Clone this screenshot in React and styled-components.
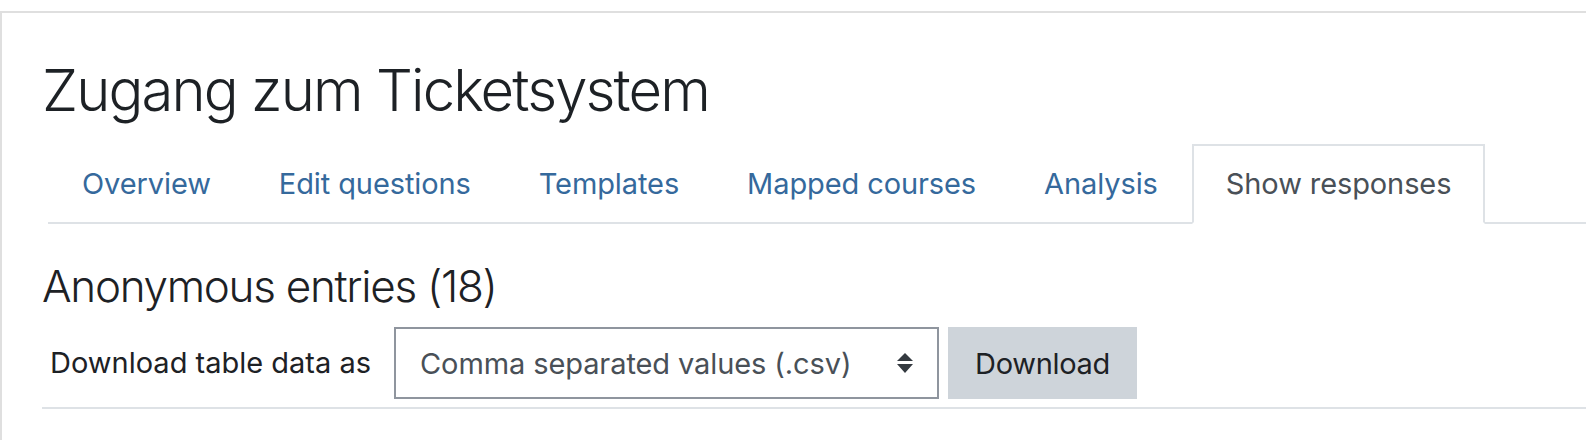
import React from 'react';
import styled, { createGlobalStyle } from 'styled-components';

const GlobalStyle = createGlobalStyle`
  html, body {
    margin: 0;
    padding: 0;
    background: #fff;
    overflow: hidden;
  }
  body {
    font-family: Inter, "Noto Sans", "Liberation Sans", sans-serif;
    color: #1d2125;
  }
`;

const tabs = [
  { label: 'Overview' },
  { label: 'Edit questions' },
  { label: 'Templates' },
  { label: 'Mapped courses' },
  { label: 'Analysis' },
  { label: 'Show responses', active: true },
];

const Panel = styled.div`
  margin-top: 11px;
  border-top: 2px solid #dfdfdf;
  border-left: 2px solid #dfdfdf;
  padding: 41px 0 0 40px;
  min-height: 440px;
  box-sizing: border-box;
`;

const Title = styled.h2`
  margin: 0 0 18px;
  font-size: 58px;
  font-weight: 300;
  line-height: 72px;
  letter-spacing: -1.9px;
  color: #1d2125;
`;

const TabList = styled.ul`
  display: flex;
  list-style: none;
  margin: 0 0 0 6px;
  padding: 0;
  border-bottom: 2px solid #dee2e6;
`;

const Tab = styled.li`
  margin-bottom: -2px;
`;

const TabLink = styled.a`
  display: block;
  padding: 16px 32px;
  font-size: 29px;
  line-height: 44px;
  letter-spacing: -0.1px;
  text-decoration: none;
  border: 2px solid transparent;
  color: ${(p) => (p.$active ? '#495057' : '#35699c')};
  ${(p) =>
    p.$active &&
    `
    background: #fff;
    border-color: #dee2e6 #dee2e6 #fff;
  `}
`;

const Section = styled.h3`
  margin: 35px 0 14px;
  font-size: 44px;
  font-weight: 300;
  line-height: 54px;
  letter-spacing: -1.3px;
  color: #1d2125;
`;

const DownloadRow = styled.div`
  display: flex;
  align-items: center;
  padding-left: 8px;
  padding-bottom: 8px;
  border-bottom: 2px solid #dee2e6;
`;

const Label = styled.label`
  font-size: 29px;
  line-height: 44px;
  color: #1d2125;
  margin-right: 23px;
`;

const SelectBox = styled.div`
  position: relative;
  box-sizing: border-box;
  width: 545px;
  height: 72px;
  display: flex;
  align-items: center;
  padding: 0 24px;
  border: 2px solid #8f959e;
  font-size: 29px;
  letter-spacing: -0.1px;
  color: #495057;
`;

const Arrows = styled.svg`
  position: absolute;
  right: 24px;
  top: 50%;
  transform: translateY(-50%);
`;

const Button = styled.button`
  margin-left: 9px;
  height: 72px;
  padding: 0 27px;
  border: none;
  background: #ced4da;
  font-family: inherit;
  font-size: 29px;
  letter-spacing: -0.3px;
  color: #1d2125;
  cursor: pointer;
`;

export default function App() {
  return (
    <>
      <GlobalStyle />
      <Panel>
        <Title>Zugang zum Ticketsystem</Title>
        <TabList>
          {tabs.map((t) => (
            <Tab key={t.label}>
              <TabLink href="#" $active={t.active}>
                {t.label}
              </TabLink>
            </Tab>
          ))}
        </TabList>
        <Section>Anonymous entries (18)</Section>
        <DownloadRow>
          <Label>Download table data as</Label>
          <SelectBox>
            Comma separated values (.csv)
            <Arrows width="16" height="20" viewBox="0 0 16 20">
              <path d="M8 0 L16 8 L0 8 Z M0 11 L16 11 L8 20 Z" fill="#343a40" />
            </Arrows>
          </SelectBox>
          <Button>Download</Button>
        </DownloadRow>
      </Panel>
    </>
  );
}
